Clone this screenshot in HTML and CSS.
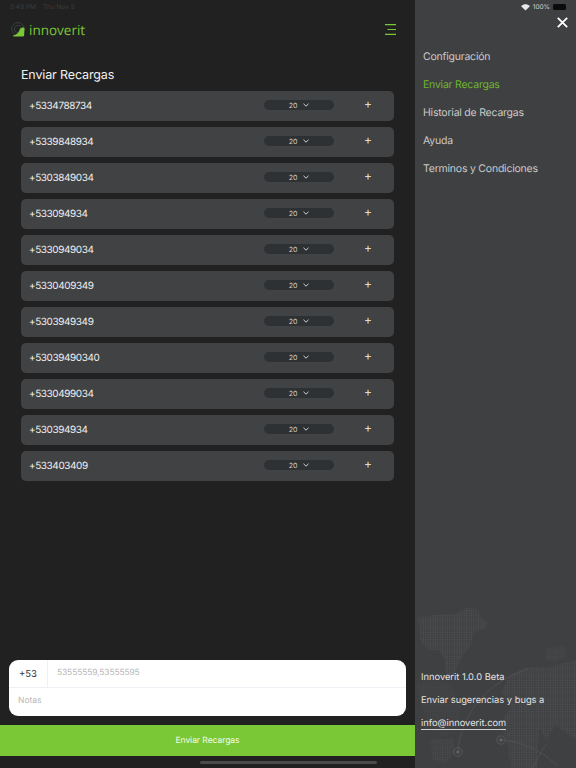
FILE: index.html
```html
<!DOCTYPE html>
<html lang="es">
<head>
<meta charset="utf-8">
<title>Innoverit</title>
<link rel="stylesheet" href="styles.css">
</head>
<body>
<div class="app">
  <main class="main">
    <div class="status-left"><span>5:49 PM</span><span>Thu Nov 5</span></div>
    <header class="topbar">
      <div class="logo">
        <svg class="logo-mark" width="17" height="15" viewBox="0 0 17 15">
          <circle cx="7" cy="7" r="6.300" fill="none" stroke="#37433b" stroke-width="1"/>
          <circle cx="7" cy="7" r="3.600" fill="none" stroke="#37433b" stroke-width="1"/>
          <path d="M2 13.300c1.800-.1 3.300-.9 4.600-2.100 1.300-1.300 2-2.800 2.300-4.400l3.100-1.600 1.500 1.100-.4 7.500-1 .6H2.500z" fill="#7ac836"/>
        </svg>
        <span class="logo-text">innoverit</span>
      </div>
      <svg class="menu-icon" width="11" height="11" viewBox="0 0 11 11">
        <path d="M0 .6h11M2.500 5.500h8.500M0 10.400h11" stroke="#7ac836" stroke-width="1.200" fill="none"/>
      </svg>
    </header>
    <h1 class="title">Enviar Recargas</h1>
    <ul class="list">
      <li class="row"><span class="phone">+5334788734</span><span class="pill">20<svg class="chev" width="6" height="4" viewBox="0 0 6 4"><path d="M.5.8 3 3.200 5.500.8" stroke="#d0d0d0" fill="none"/></svg></span><span class="plus">+</span></li>
      <li class="row"><span class="phone">+5339848934</span><span class="pill">20<svg class="chev" width="6" height="4" viewBox="0 0 6 4"><path d="M.5.8 3 3.200 5.500.8" stroke="#d0d0d0" fill="none"/></svg></span><span class="plus">+</span></li>
      <li class="row"><span class="phone">+5303849034</span><span class="pill">20<svg class="chev" width="6" height="4" viewBox="0 0 6 4"><path d="M.5.8 3 3.200 5.500.8" stroke="#d0d0d0" fill="none"/></svg></span><span class="plus">+</span></li>
      <li class="row"><span class="phone">+533094934</span><span class="pill">20<svg class="chev" width="6" height="4" viewBox="0 0 6 4"><path d="M.5.8 3 3.200 5.500.8" stroke="#d0d0d0" fill="none"/></svg></span><span class="plus">+</span></li>
      <li class="row"><span class="phone">+5330949034</span><span class="pill">20<svg class="chev" width="6" height="4" viewBox="0 0 6 4"><path d="M.5.8 3 3.200 5.500.8" stroke="#d0d0d0" fill="none"/></svg></span><span class="plus">+</span></li>
      <li class="row"><span class="phone">+5330409349</span><span class="pill">20<svg class="chev" width="6" height="4" viewBox="0 0 6 4"><path d="M.5.8 3 3.200 5.500.8" stroke="#d0d0d0" fill="none"/></svg></span><span class="plus">+</span></li>
      <li class="row"><span class="phone">+5303949349</span><span class="pill">20<svg class="chev" width="6" height="4" viewBox="0 0 6 4"><path d="M.5.8 3 3.200 5.500.8" stroke="#d0d0d0" fill="none"/></svg></span><span class="plus">+</span></li>
      <li class="row"><span class="phone">+53039490340</span><span class="pill">20<svg class="chev" width="6" height="4" viewBox="0 0 6 4"><path d="M.5.8 3 3.200 5.500.8" stroke="#d0d0d0" fill="none"/></svg></span><span class="plus">+</span></li>
      <li class="row"><span class="phone">+5330499034</span><span class="pill">20<svg class="chev" width="6" height="4" viewBox="0 0 6 4"><path d="M.5.8 3 3.200 5.500.8" stroke="#d0d0d0" fill="none"/></svg></span><span class="plus">+</span></li>
      <li class="row"><span class="phone">+530394934</span><span class="pill">20<svg class="chev" width="6" height="4" viewBox="0 0 6 4"><path d="M.5.8 3 3.200 5.500.8" stroke="#d0d0d0" fill="none"/></svg></span><span class="plus">+</span></li>
      <li class="row"><span class="phone">+533403409</span><span class="pill">20<svg class="chev" width="6" height="4" viewBox="0 0 6 4"><path d="M.5.8 3 3.200 5.500.8" stroke="#d0d0d0" fill="none"/></svg></span><span class="plus">+</span></li>
    </ul>
    <form class="compose">
      <div class="compose-top"><span class="prefix">+53</span><span class="numbers">53555559,53555595</span></div>
      <div class="notes">Notas</div>
    </form>
    <div class="send">Enviar Recargas</div>
    <div class="home-gap"></div>
  </main>
  <aside class="side">
    <svg class="map" width="161" height="168" viewBox="0 0 161 168">
      <defs>
        <pattern id="dots" width="2.400" height="2.400" patternUnits="userSpaceOnUse"><circle cx="1.200" cy="1.200" r=".75" fill="#4e5053"/></pattern>
      </defs>
      <path d="M3 18 20 15 40 14 52 8 62 9 68 20 74 23 70 28 58 33 56 46 48 55 42 68 37 78 30 72 30 60 24 50 14 50 6 42z" fill="url(#dots)"/>
      <path d="M86 92 96 74 112 67 130 68 161 60 161 140 150 132 140 125 132 140 124 128 122 168 96 168 92 140 84 124 96 108z" fill="url(#dots)"/>
      <path d="M132 48 150 46 152 56 140 62 130 60z" fill="url(#dots)" opacity=".7"/>
      <path d="M15 140 38 138 40 152 30 164 18 160z" fill="url(#dots)" opacity=".8"/>
      <path d="M2 85 12 80 34 84 46 106 42 128 30 136 16 130 8 108z" fill="url(#dots)" opacity=".45"/>
      <path d="M43 150C46 120 66 84 113 69M86 140C105 141 125 150 142 165M118 168C122 160 126 150 132 144" fill="none" stroke="#545558" stroke-width=".7"/>
      <circle cx="43" cy="152" r="4.200" fill="none" stroke="#5a5c5f" stroke-width=".8"/><circle cx="43" cy="152" r="1.800" fill="#5f6164"/>
      <circle cx="86" cy="140" r="4.200" fill="none" stroke="#5a5c5f" stroke-width=".8"/><circle cx="86" cy="140" r="1.800" fill="#5f6164"/>
    </svg>
    <div class="status-right">
      <svg width="9" height="7" viewBox="0 0 10 8"><path d="M5 7.500 0 2.500C3 -.5 7 -.5 10 2.500z" fill="#e8e8e8"/></svg>
      <span>100%</span>
      <span class="battery"></span>
    </div>
    <div class="close-row">
      <svg width="11" height="11" viewBox="0 0 11 11"><path d="M.8.8l9.400 9.400M10.200.8.800 10.200" stroke="#fff" stroke-width="1.800" fill="none"/></svg>
    </div>
    <nav class="nav">
      <a class="nav-item">Configuración</a>
      <a class="nav-item active">Enviar Recargas</a>
      <a class="nav-item">Historial de Recargas</a>
      <a class="nav-item">Ayuda</a>
      <a class="nav-item">Terminos y Condiciones</a>
    </nav>
    <div class="about">
      <p>Innoverit 1.0.0 Beta</p>
      <p>Enviar sugerencias y bugs a</p>
      <p><a class="mail">info@innoverit.com</a></p>
    </div>
  </aside>
  <div class="home-bar"></div>
</div>
</body>
</html>
```

FILE: styles.css
```css
* { box-sizing: border-box; }
html, body { margin: 0; height: 100%; }
body { font-family: Inter, "Noto Sans", sans-serif; background: #212121; color: #e8e8e8; overflow: hidden; text-rendering: geometricPrecision; }
.app { display: flex; width: 576px; height: 768px; position: relative; }

.main { width: 415px; height: 768px; background: #212121; display: flex; flex-direction: column; }
.status-left { height: 14px; padding: 1px 0 0 10px; display: flex; gap: 7px; font-size: 6.500px; line-height: 13px; color: #3d3d3d; }
.topbar { height: 31px; padding: 0 19px 0 11px; display: flex; align-items: center; justify-content: space-between; }
.logo { display: flex; align-items: center; }
.logo-mark { margin-right: 1px; }
.logo-text { font-family: "Open Sans", sans-serif; font-weight: 400; font-size: 13.500px; letter-spacing: 0; color: #7ac836; }
.title { margin: 22px 0 7px 21px; font-size: 12.500px; letter-spacing: -.14px; line-height: 17px; font-weight: 400; color: #f0f0f0; }
.list { list-style: none; margin: 0 21px; padding: 0; display: flex; flex-direction: column; gap: 6px; }
.row { height: 30px; background: #414244; border-radius: 5px; display: flex; align-items: center; padding: 0 0 0 8px; }
.phone { flex: none; width: 235px; font-size: 10px; letter-spacing: -.42px; color: #f0f0f0; margin-bottom: 1px; }
.pill { flex: none; width: 70px; height: 10px; border-radius: 5px; background: #2e3134; display: flex; align-items: center; justify-content: center; gap: 6px; font-size: 7px; color: #cfcfcf; margin-bottom: 2px; }
.chev { display: block; }
.plus { flex: none; width: 24px; margin-left: 22px; text-align: center; font-size: 12px; line-height: 12px; color: #dcdcdc; margin-bottom: 4px; }

.compose { margin: auto 9px 0; width: 397px; height: 56px; background: #fff; border-radius: 9px; display: flex; flex-direction: column; }
.compose-top { height: 28px; display: flex; border-bottom: 1px solid #edf0f5; }
.prefix { width: 39px; border-right: 1px solid #edf0f5; text-align: center; font-size: 9.500px; line-height: 30px; color: #333; }
.numbers { padding-left: 9px; font-size: 8.500px; letter-spacing: -.15px; line-height: 26px; color: #b8b8b8; }
.notes { padding-left: 9px; font-size: 8.500px; line-height: 26px; color: #b8b8b8; }
.send { margin-top: 9px; height: 31px; background: #7ac836; text-align: center; font-size: 8.500px; letter-spacing: -.05px; line-height: 32px; color: #f4fbe9; }
.home-gap { height: 12px; }

.side { width: 161px; height: 768px; background: #3f4042; position: relative; display: flex; flex-direction: column; }
.map { position: absolute; left: 0; bottom: 0; }
.status-right { height: 14px; display: flex; align-items: center; justify-content: flex-end; gap: 3px; padding-right: 10px; font-size: 6.500px; color: #d8d8d8; }
.battery { width: 13px; height: 6px; background: #0b0b0b; border-radius: 1.500px; }
.close-row { height: 16px; display: flex; justify-content: flex-end; padding: 3px 8px 0 0; }
.close-row svg { display: block; }
.nav { margin-top: 13px; padding-left: 8px; display: flex; flex-direction: column; }
.nav-item { height: 28px; font-size: 10.500px; letter-spacing: -.22px; line-height: 28px; color: #c9c9c9; }
.nav-item.active { color: #6fb52f; }
.about { position: relative; margin-top: auto; padding: 0 0 33px 6px; font-size: 9.300px; color: #e4e4e4; }
.about p { margin: 0; height: 23px; line-height: 23px; }
.mail { border-bottom: 1px solid #cfcfcf; padding-bottom: 0; }
.home-bar { position: absolute; left: 200px; top: 761px; width: 177px; height: 3px; border-radius: 2px; background: #4a4b4d; }
```
